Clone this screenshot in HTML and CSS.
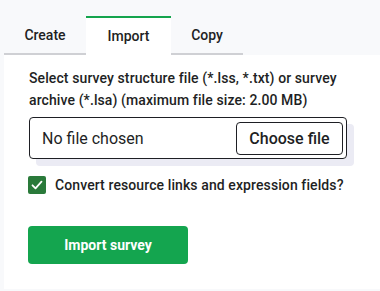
FILE: index.html
```html
<!DOCTYPE html>
<html lang="en">
<head>
  <meta charset="UTF-8">
  <title>Import survey</title>
  <link rel="stylesheet" href="styles.css">
</head>
<body>
  <div class="tabs">
    <div class="tab">Create</div>
    <div class="tab active">Import</div>
    <div class="tab">Copy</div>
  </div>
  <div class="panel">
    <div class="field-label">Select survey structure file (*.lss, *.txt) or survey archive (*.lsa) (maximum file size: 2.00 MB)</div>
    <div class="file-input">
      <span class="file-name">No file chosen</span>
      <button class="choose-btn">Choose file</button>
    </div>
    <div class="checkbox-wrapper">
      <span class="check">
        <svg viewBox="0 0 18 18" width="18" height="18">
          <path d="M4.5 9.3l3 3 6-6.6" fill="none" stroke="#fff" stroke-width="1.8" stroke-linecap="round" stroke-linejoin="round"/>
        </svg>
      </span>
      <label>Convert resource links and expression fields?</label>
    </div>
    <button class="import-btn">Import survey</button>
  </div>
</body>
</html>
```

FILE: styles.css
```css
body {
  margin: 0;
  padding: 16px 0 2px 4px;
  background: #f8f9fb;
  font-family: Roboto, "Liberation Sans", sans-serif;
  color: #1e1f24;
}
.tabs {
  display: flex;
}
.tab {
  height: 37px;
  line-height: 39px;
  font-size: 14px;
  font-weight: 500;
  text-align: center;
  border-bottom: 2px solid #cfd0d4;
}
.tab:nth-child(1) {
  width: 82px;
}
.tab:nth-child(3) {
  width: 72px;
}
.tab.active {
  width: 85px;
  height: 35px;
  line-height: 37px;
  background: #fff;
  border-top: 2px solid #14a44d;
  border-bottom: 2px solid #fff;
}
.panel {
  background: #fff;
  padding: 12px 33px 25px 24px;
}
.field-label {
  font-size: 14px;
  font-weight: 500;
  line-height: 22px;
  letter-spacing: 0.1px;
  padding-left: 1px;
}
.file-input {
  margin-top: 6px;
  margin-left: 1px;
  height: 40px;
  border: 1px solid #1e1f24;
  border-radius: 4px;
  display: flex;
  align-items: center;
  justify-content: space-between;
  padding: 0 3px 0 12px;
  box-shadow: 7px 7px 0 #ebebf4;
}
.file-name {
  font-size: 16px;
}
.choose-btn {
  height: 33px;
  width: 107px;
  border: 1px solid #1e1f24;
  border-radius: 4px;
  background: #fff;
  font-family: inherit;
  font-size: 16px;
  font-weight: 500;
  color: #1e1f24;
  padding: 0;
}
.checkbox-wrapper {
  display: flex;
  align-items: center;
  gap: 9px;
  margin-top: 17px;
}
.check {
  width: 18px;
  height: 18px;
  border-radius: 2px;
  background: #2a7a3a;
  display: flex;
}
label {
  font-size: 14px;
  font-weight: 500;
  letter-spacing: 0.1px;
}
.import-btn {
  display: block;
  margin-top: 32px;
  width: 160px;
  height: 38px;
  border: none;
  border-radius: 4px;
  background: #14a54f;
  color: #fff;
  font-family: inherit;
  font-size: 14px;
  font-weight: 700;
}
```
